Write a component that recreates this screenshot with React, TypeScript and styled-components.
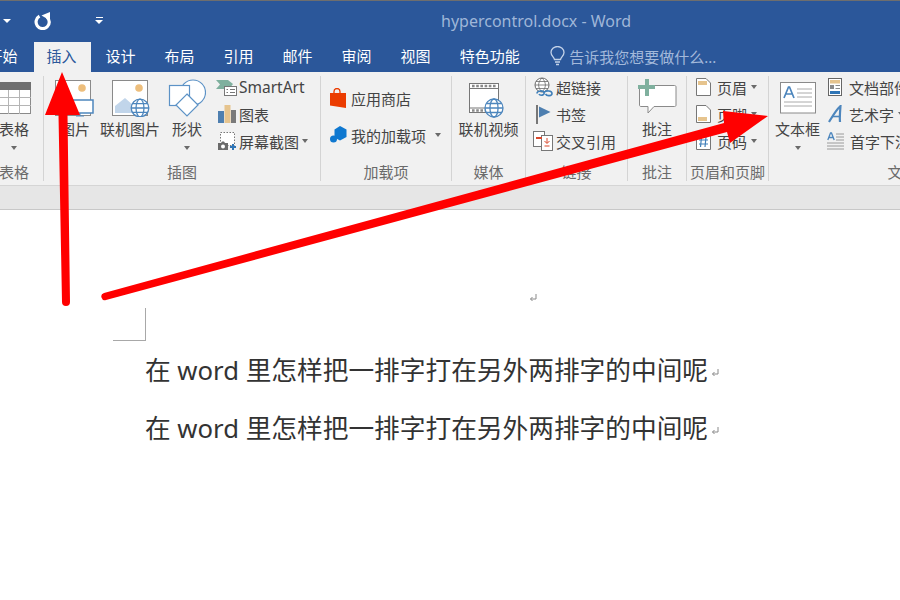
import React from 'react'
import styled, { createGlobalStyle } from 'styled-components'

const GlobalStyle = createGlobalStyle`
  html, body {
    margin: 0;
    padding: 0;
    background: #fff;
  }
  * {
    box-sizing: border-box;
  }
`

const FONT = `"Noto Sans", "Noto Sans CJK SC", sans-serif`

const Window = styled.div`
  position: relative;
  width: 900px;
  height: 600px;
  overflow: hidden;
  background: #fff;
  font-family: ${FONT};
  color: #444;
`

const TitleRow = styled.div`
  display: flex;
  align-items: center;
  height: 42px;
  padding-bottom: 2px;
  border-top: 1px solid #6e6e6e;
  background: #2b579a;
`

const QuickAccess = styled.div`
  display: flex;
  align-items: center;
  flex: 0 0 441px;
  padding-left: 3px;
`

const TitleText = styled.div`
  font-size: 16px;
  color: #9fb6d8;
  white-space: nowrap;
`

const WhiteCaret = styled.span`
  width: 0;
  height: 0;
  border-left: 4px solid transparent;
  border-right: 4px solid transparent;
  border-top: 4px solid #fff;
`

const UndoSlot = styled.span`
  display: flex;
  margin-left: 23px;
`

const CustomizeSlot = styled.span`
  display: flex;
  flex-direction: column;
  align-items: center;
  gap: 2px;
  margin-left: 43px;

  &::before {
    content: '';
    width: 7px;
    height: 1px;
    background: #fff;
  }
`

const TabRow = styled.div`
  display: flex;
  height: 30px;
  margin-left: -25px;
  background: #2b579a;
`

const Tab = styled.div<{ $active?: boolean }>`
  display: flex;
  align-items: center;
  padding: 0 14.5px 3px 12.5px;
  margin-right: 2px;
  font-size: 15px;
  white-space: nowrap;
  color: ${p => (p.$active ? '#2b579a' : '#fff')};
  background: ${p => (p.$active ? '#f1f1f1' : 'transparent')};
`

const Search = styled.div`
  display: flex;
  align-items: center;
  gap: 4px;
  margin-left: 14px;
  padding-bottom: 2px;
  font-size: 15px;
  color: #a3b9da;
  white-space: nowrap;
`

const Ribbon = styled.div`
  display: flex;
  height: 114px;
  padding-top: 4px;
  background: #f1f1f1;
  border-bottom: 1px solid #d5d5d5;
`

const Group = styled.section<{ $width: number; $offset?: number }>`
  display: flex;
  flex-direction: column;
  flex: 0 0 ${p => p.$width}px;
  height: 105px;
  margin-left: ${p => p.$offset ?? 0}px;
  border-right: 1px solid #d4d4d4;
`

const GroupBody = styled.div<{ $pad?: number }>`
  display: flex;
  flex: 1;
  padding-left: ${p => p.$pad ?? 0}px;
`

const GroupLabel = styled.div`
  height: 20px;
  line-height: 22px;
  font-size: 15px;
  text-align: center;
  color: #6a6a6a;
  white-space: nowrap;
`

const LargeButton = styled.div<{ $width: number }>`
  display: flex;
  flex-direction: column;
  align-items: center;
  flex: 0 0 ${p => p.$width}px;
  padding-top: 3px;
`

const LargeIcon = styled.div<{ $drop?: number }>`
  display: flex;
  justify-content: center;
  align-items: flex-start;
  height: 38px;
  padding-top: ${p => p.$drop ?? 0}px;
`

const LargeText = styled.div`
  height: 22px;
  line-height: 22px;
  margin-top: 1px;
  font-size: 15px;
  color: #444;
  white-space: nowrap;
`

const Caret = styled.span<{ $gap?: number }>`
  flex: none;
  width: 0;
  height: 0;
  margin-left: ${p => p.$gap ?? 0}px;
  border-left: 3.5px solid transparent;
  border-right: 3.5px solid transparent;
  border-top: 4px solid #6a6a6a;
`

const LargeCaret = styled(Caret)`
  margin-top: 6px;
`

const SmallColumn = styled.div<{ $top?: number; $gap?: number; $left?: number }>`
  display: flex;
  flex-direction: column;
  gap: ${p => p.$gap ?? 3}px;
  margin: ${p => p.$top ?? -1}px 0 0 ${p => p.$left ?? 0}px;
`

const SmallRow = styled.div`
  display: flex;
  align-items: center;
  height: 24px;
  font-size: 15px;
  color: #444;
  white-space: nowrap;
`

const LatinLabel = styled.span`
  font-size: 15.5px;
`

const SmallIcon = styled.span<{ $width: number; $gap: number }>`
  display: flex;
  justify-content: center;
  flex: 0 0 ${p => p.$width}px;
  margin-right: ${p => p.$gap}px;
`

const Strip = styled.div`
  height: 24px;
  background: #e6e6e6;
  border-bottom: 1px solid #c8c8c8;
`

const Page = styled.main`
  padding-top: 83px;
`

const TopMark = styled.div`
  display: flex;
  height: 10px;
  margin-left: 529px;
`

const CropMark = styled.div`
  width: 33px;
  height: 33px;
  margin: 5px 0 0 113px;
  border-right: 1px solid #a8a8a8;
  border-bottom: 1px solid #a8a8a8;
`

const Paragraph = styled.p`
  display: flex;
  align-items: center;
  height: 58px;
  margin: 0;
  padding: 0 0 2px 145px;
  font-size: 25.7px;
  color: #333;
  white-space: pre;
`

const ParagraphEnd = styled.span`
  display: flex;
  margin: 6px 0 0 3px;
`

const ArrowLayer = styled.svg`
  position: absolute;
  top: 0;
  left: 0;
  pointer-events: none;
`

const Globe = ({ cx, cy, r }: { cx: number; cy: number; r: number }) => (
  <g fill="#fff" stroke="#4d86bd" strokeWidth="1.3">
    <circle cx={cx} cy={cy} r={r} />
    <ellipse cx={cx} cy={cy} rx={r * 0.45} ry={r} fill="none" />
    <path d={`M${cx - r} ${cy}H${cx + r}M${cx - r * 0.85} ${cy - r * 0.5}H${cx + r * 0.85}M${cx - r * 0.85} ${cy + r * 0.5}H${cx + r * 0.85}`} />
  </g>
)

const ReturnMark = () => (
  <svg width="8" height="9" viewBox="0 0 8 9" fill="none" stroke="#8a8a8a" strokeWidth="1">
    <path d="M7 1V6H1.5M3.5 4L1.5 6L3.5 8" />
  </svg>
)

const UndoIcon = () => (
  <svg width="18" height="18" viewBox="0 0 18 18" fill="none">
    <path d="M5.500 4.200A6.600 6.600 0 1 0 13 5" stroke="#fff" strokeWidth="3.200" />
    <path d="M7.500 3.500L16 0V8.500Z" fill="#fff" />
  </svg>
)

const TableIcon = () => (
  <svg width="34" height="32" viewBox="0 0 34 32">
    <rect x="0.5" y="0.5" width="33" height="31" fill="#fff" stroke="#8a8a8a" />
    <rect x="0" y="0" width="34" height="8" fill="#6f6f6f" />
    <path d="M0 15.5H34M0 23.5H34M11.5 8V32M22.5 8V32" stroke="#b5b5b5" />
  </svg>
)

const PictureIcon = () => (
  <svg width="40" height="38" viewBox="0 0 40 38">
    <rect x="0.5" y="1.500" width="35" height="35" fill="#fff" stroke="#8a8a8a" />
    <circle cx="27" cy="9" r="3.8" fill="#edbe7c" />
    <rect x="13" y="21" width="25" height="13" fill="#fff" stroke="#4d86bd" strokeWidth="1.5" />
    <path d="M25 34V37M21 37H29" stroke="#4d86bd" />
  </svg>
)

const OnlinePictureIcon = () => (
  <svg width="40" height="38" viewBox="0 0 40 38">
    <rect x="2.500" y="1.500" width="35" height="35" fill="#fff" stroke="#8a8a8a" />
    <circle cx="29" cy="9" r="3.8" fill="#edbe7c" />
    <path d="M5 34V27L15 19L24 27L28 34Z" fill="#c1d5ea" />
    <Globe cx={30} cy={29} r={8.8} />
  </svg>
)

const ShapesIcon = () => (
  <svg width="38" height="38" viewBox="0 0 38 38" fill="#fff" stroke="#5c92c6" strokeWidth="1.2">
    <circle cx="25" cy="13.500" r="12.5" />
    <rect x="1.5" y="6.5" width="20" height="20" />
    <path d="M19 15L30 26L19 37L8 26Z" />
  </svg>
)

const SmartArtIcon = () => (
  <svg width="21" height="17" viewBox="0 0 21 17">
    <path d="M0 1H12L17 5L13 10H0L4 5.5Z" fill="#7fb09e" />
    <rect x="8.5" y="7.5" width="12" height="9" fill="#fff" stroke="#777" />
    <path d="M10.5 10.5H12M14 10.5H19M10.5 13.5H12M14 13.5H19" stroke="#777" />
  </svg>
)

const ChartIcon = () => (
  <svg width="18" height="18" viewBox="0 0 18 18">
    <rect x="0" y="6" width="6" height="12" fill="#4e7fb0" />
    <rect x="6.5" y="0" width="6" height="18" fill="#e6c48e" />
    <rect x="13" y="5" width="5" height="13" fill="#7a7a7a" />
  </svg>
)

const ScreenshotIcon = () => (
  <svg width="18" height="19" viewBox="0 0 18 19">
    <rect x="2.5" y="0.5" width="14" height="13" fill="#fff" stroke="#777" strokeDasharray="1.5 1.5" />
    <path d="M0 11H3L4 9.5H6L7 11H10V18H0Z" fill="#6a6a6a" />
    <circle cx="5" cy="14.5" r="2" fill="#fff" />
    <path d="M15 12V18M12 15H18" stroke="#2e75b6" strokeWidth="2" />
  </svg>
)

const StoreIcon = () => (
  <svg width="16" height="20" viewBox="0 0 16 20">
    <path d="M4 6V3.5A3 3 0 0 1 10 3.5V6" fill="none" stroke="#eb3c00" strokeWidth="1.3" />
    <path d="M0 5H16V20L0 17.5Z" fill="#eb3c00" />
  </svg>
)

const AddinIcon = () => (
  <svg width="17" height="18" viewBox="0 0 17 18" fill="#0f78d0">
    <path d="M10 0L16.5 3.5V11L10 14.5L4.5 11.5V3.5Z" />
    <circle cx="3.5" cy="13" r="3.5" />
  </svg>
)

const VideoIcon = () => (
  <svg width="40" height="35" viewBox="0 0 40 35">
    <rect x="0.5" y="0.5" width="29" height="29" fill="#fff" stroke="#777" />
    <path d="M0 5.5H30M0 25H30" stroke="#777" />
    <path d="M3 3H27M3 27.5H27" stroke="#8a8a8a" strokeWidth="2.6" strokeDasharray="2.6 1.6" />
    <Globe cx={25} cy={25} r={9} />
  </svg>
)

const LinkIcon = () => (
  <svg width="19" height="20" viewBox="0 0 19 20" fill="none">
    <circle cx="8" cy="8" r="7" fill="#fff" stroke="#6a6a6a" />
    <path d="M1 8H15M8 1C3.5 5 3.5 11 8 15M8 1C12.500 5 12.500 11 8 15M2 4.500H14M2 11.500H14" stroke="#6a6a6a" strokeWidth="0.8" />
    <path d="M3 16.500C3 13.500 9 13 10 15.500C11 18.500 6 19 5 17M10 15.500C12 13 18 13.500 18 16.500C18 19 13 19.500 11.500 17" stroke="#3f7fb9" strokeWidth="1.6" />
  </svg>
)

const BookmarkIcon = () => (
  <svg width="15" height="19" viewBox="0 0 15 19">
    <rect x="0" y="0" width="2" height="19" fill="#777" />
    <path d="M3 1.500L14.500 7L3 12.500Z" fill="#4e7fb0" />
  </svg>
)

const CrossRefIcon = () => (
  <svg width="20" height="20" viewBox="0 0 20 20">
    <rect x="0.5" y="0.500" width="11" height="15" fill="#fff" stroke="#777" />
    <rect x="8.500" y="4.500" width="11" height="15" fill="#fff" stroke="#777" />
    <rect x="3" y="6" width="6" height="2" fill="#d9472b" />
    <path d="M14 7V12M11.500 10L14 12.500L16.500 10M11.500 15H16.500" fill="none" stroke="#d9472b" />
  </svg>
)

const CommentIcon = () => (
  <svg width="39" height="38" viewBox="0 0 39 38">
    <path d="M3 6.500H36.500C37.500 6.500 38 7 38 8V26C38 27 37.500 27.500 36.500 27.500H16L10 34V27.500H3C2 27.500 1.500 27 1.500 26V8C1.500 7 2 6.500 3 6.500Z" fill="#fff" stroke="#8a8a8a" />
    <path d="M7 0H11V6H17V10H11V17H7V10H0V6H7Z" fill="#7fb09e" />
  </svg>
)

const HeaderIcon = ({ band }: { band: 'top' | 'bottom' }) => (
  <svg width="15" height="18" viewBox="0 0 15 18">
    <path d="M0.500 0.500H10L14.500 5V17.500H0.500Z" fill="#fff" stroke="#777" />
    <rect x="2" y={band === 'top' ? 3 : 12} width="9" height="4" fill="#e6c48e" />
  </svg>
)

const PageNumberIcon = () => (
  <svg width="15" height="18" viewBox="0 0 15 18">
    <path d="M0.500 0.500H14.500V17.500H0.500Z" fill="#fff" stroke="#777" />
    <path d="M5.500 5L4.500 15M10 5L9 15M3 8H12M3 12H12" stroke="#3f7fb9" strokeWidth="1.200" fill="none" />
  </svg>
)

const TextBoxIcon = () => (
  <svg width="36" height="32" viewBox="0 0 36 32">
    <rect x="0.500" y="0.500" width="35" height="30.500" fill="#fff" stroke="#8a8a8a" />
    <path d="M4 16L8.500 5H9.500L14 16M5.800 12H12.200" fill="none" stroke="#4d86bd" strokeWidth="1.700" />
    <path d="M17 7H32M17 11H32M17 15H32M4 20H32M4 24H32" stroke="#aaa" />
  </svg>
)

const PartsIcon = () => (
  <svg width="14" height="18" viewBox="0 0 14 18">
    <rect x="0.500" y="0.500" width="13" height="17" fill="#fff" stroke="#666" />
    <rect x="2" y="2" width="10" height="3.500" fill="#e6c48e" />
    <rect x="2" y="7" width="4" height="4" fill="#8a8a8a" />
    <path d="M7.500 7.500H12M7.500 10.500H12" stroke="#8a8a8a" />
    <rect x="2" y="13" width="10" height="3" fill="#2e75b6" />
  </svg>
)

const WordArtIcon = () => (
  <svg width="14" height="18" viewBox="0 0 14 18" fill="none" stroke="#4d86bd">
    <path d="M1 17C4 12 8 5 12.500 1C12 7 11.500 12 12 17" strokeWidth="2.200" />
    <path d="M4 11.500H12" strokeWidth="1.600" />
  </svg>
)

const DropCapIcon = () => (
  <svg width="17" height="18" viewBox="0 0 17 18" fill="none">
    <path d="M0.800 8L3.500 1H4.500L7.200 8M1.800 5.500H6.200" stroke="#4d86bd" strokeWidth="1.300" />
    <path d="M9 2H17M9 5H17M9 8H17M0 11H17M0 14H17M0 17H17" stroke="#9a9a9a" />
  </svg>
)

const BulbIcon = () => (
  <svg width="15" height="20" viewBox="0 0 15 20" fill="none" stroke="#c3d2e8" strokeWidth="1.300">
    <path d="M4.500 13.500C4 11 1 9.500 1 6.500A6.500 6 0 0 1 14 6.500C14 9.500 11 11 10.500 13.500Z" />
    <path d="M5 16H10M6 18.500H9" />
  </svg>
)

const tabs = ['开始', '插入', '设计', '布局', '引用', '邮件', '审阅', '视图', '特色功能']

const App = () => (
  <Window>
    <GlobalStyle />
    <TitleRow>
      <QuickAccess>
        <WhiteCaret />
        <UndoSlot>
          <UndoIcon />
        </UndoSlot>
        <CustomizeSlot>
          <WhiteCaret />
        </CustomizeSlot>
      </QuickAccess>
      <TitleText>hypercontrol.docx - Word</TitleText>
    </TitleRow>
    <TabRow>
      {tabs.map(t => (
        <Tab key={t} $active={t === '插入'}>
          {t}
        </Tab>
      ))}
      <Search>
        <BulbIcon />
        告诉我您想要做什么...
      </Search>
    </TabRow>
    <Ribbon>
      <Group $width={59} $offset={-15}>
        <GroupBody>
          <LargeButton $width={58}>
            <LargeIcon $drop={3}>
              <TableIcon />
            </LargeIcon>
            <LargeText>表格</LargeText>
            <LargeCaret />
          </LargeButton>
        </GroupBody>
        <GroupLabel>表格</GroupLabel>
      </Group>
      <Group $width={277}>
        <GroupBody $pad={11}>
          <LargeButton $width={40}>
            <LargeIcon>
              <PictureIcon />
            </LargeIcon>
            <LargeText>图片</LargeText>
          </LargeButton>
          <LargeButton $width={70}>
            <LargeIcon>
              <OnlinePictureIcon />
            </LargeIcon>
            <LargeText>联机图片</LargeText>
          </LargeButton>
          <LargeButton $width={44}>
            <LargeIcon>
              <ShapesIcon />
            </LargeIcon>
            <LargeText>形状</LargeText>
            <LargeCaret />
          </LargeButton>
          <SmallColumn $left={7}>
            <SmallRow>
              <SmallIcon $width={21} $gap={2}>
                <SmartArtIcon />
              </SmallIcon>
              <LatinLabel>SmartArt</LatinLabel>
            </SmallRow>
            <SmallRow>
              <SmallIcon $width={21} $gap={2}>
                <ChartIcon />
              </SmallIcon>
              图表
            </SmallRow>
            <SmallRow>
              <SmallIcon $width={21} $gap={2}>
                <ScreenshotIcon />
              </SmallIcon>
              屏幕截图
              <Caret $gap={3} />
            </SmallRow>
          </SmallColumn>
        </GroupBody>
        <GroupLabel>插图</GroupLabel>
      </Group>
      <Group $width={131}>
        <GroupBody $pad={9}>
          <SmallColumn $top={10} $gap={13}>
            <SmallRow>
              <SmallIcon $width={16} $gap={5}>
                <StoreIcon />
              </SmallIcon>
              应用商店
            </SmallRow>
            <SmallRow>
              <SmallIcon $width={16} $gap={4}>
                <AddinIcon />
              </SmallIcon>
              我的加载项
              <Caret $gap={9} />
            </SmallRow>
          </SmallColumn>
        </GroupBody>
        <GroupLabel>加载项</GroupLabel>
      </Group>
      <Group $width={74}>
        <GroupBody>
          <LargeButton $width={73}>
            <LargeIcon $drop={4}>
              <VideoIcon />
            </LargeIcon>
            <LargeText>联机视频</LargeText>
          </LargeButton>
        </GroupBody>
        <GroupLabel>媒体</GroupLabel>
      </Group>
      <Group $width={102}>
        <GroupBody $pad={7}>
          <SmallColumn>
            <SmallRow>
              <SmallIcon $width={20} $gap={3}>
                <LinkIcon />
              </SmallIcon>
              超链接
            </SmallRow>
            <SmallRow>
              <SmallIcon $width={20} $gap={3}>
                <BookmarkIcon />
              </SmallIcon>
              书签
            </SmallRow>
            <SmallRow>
              <SmallIcon $width={20} $gap={3}>
                <CrossRefIcon />
              </SmallIcon>
              交叉引用
            </SmallRow>
          </SmallColumn>
        </GroupBody>
        <GroupLabel>链接</GroupLabel>
      </Group>
      <Group $width={59}>
        <GroupBody>
          <LargeButton $width={58}>
            <LargeIcon>
              <CommentIcon />
            </LargeIcon>
            <LargeText>批注</LargeText>
          </LargeButton>
        </GroupBody>
        <GroupLabel>批注</GroupLabel>
      </Group>
      <Group $width={82}>
        <GroupBody $pad={9}>
          <SmallColumn>
            <SmallRow>
              <SmallIcon $width={15} $gap={6}>
                <HeaderIcon band="top" />
              </SmallIcon>
              页眉
              <Caret $gap={4} />
            </SmallRow>
            <SmallRow>
              <SmallIcon $width={15} $gap={6}>
                <HeaderIcon band="bottom" />
              </SmallIcon>
              页脚
              <Caret $gap={4} />
            </SmallRow>
            <SmallRow>
              <SmallIcon $width={15} $gap={6}>
                <PageNumberIcon />
              </SmallIcon>
              页码
              <Caret $gap={4} />
            </SmallRow>
          </SmallColumn>
        </GroupBody>
        <GroupLabel>页眉和页脚</GroupLabel>
      </Group>
      <Group $width={268}>
        <GroupBody>
          <LargeButton $width={57}>
            <LargeIcon $drop={3}>
              <TextBoxIcon />
            </LargeIcon>
            <LargeText>文本框</LargeText>
            <LargeCaret />
          </LargeButton>
          <SmallColumn $left={1}>
            <SmallRow>
              <SmallIcon $width={16} $gap={6}>
                <PartsIcon />
              </SmallIcon>
              文档部件
            </SmallRow>
            <SmallRow>
              <SmallIcon $width={16} $gap={6}>
                <WordArtIcon />
              </SmallIcon>
              艺术字
              <Caret $gap={4} />
            </SmallRow>
            <SmallRow>
              <SmallIcon $width={16} $gap={6}>
                <DropCapIcon />
              </SmallIcon>
              首字下沉
            </SmallRow>
          </SmallColumn>
        </GroupBody>
        <GroupLabel>文本</GroupLabel>
      </Group>
    </Ribbon>
    <Strip />
    <Page>
      <TopMark>
        <ReturnMark />
      </TopMark>
      <CropMark />
      <Paragraph>
        在 word 里怎样把一排字打在另外两排字的中间呢
        <ParagraphEnd>
          <ReturnMark />
        </ParagraphEnd>
      </Paragraph>
      <Paragraph>
        在 word 里怎样把一排字打在另外两排字的中间呢
        <ParagraphEnd>
          <ReturnMark />
        </ParagraphEnd>
      </Paragraph>
    </Page>
    <ArrowLayer width="900" height="600" viewBox="0 0 900 600" fill="#ff0000">
      <path d="M62 72L80 115H67.500L70 302A4 4 0 0 1 62 302L58.500 115H45Z" />
      <path d="M768 116L730 143L727 132L106 300A3.600 3.600 0 0 1 104 293L724 123L723 111Z" />
    </ArrowLayer>
  </Window>
)

export default App
